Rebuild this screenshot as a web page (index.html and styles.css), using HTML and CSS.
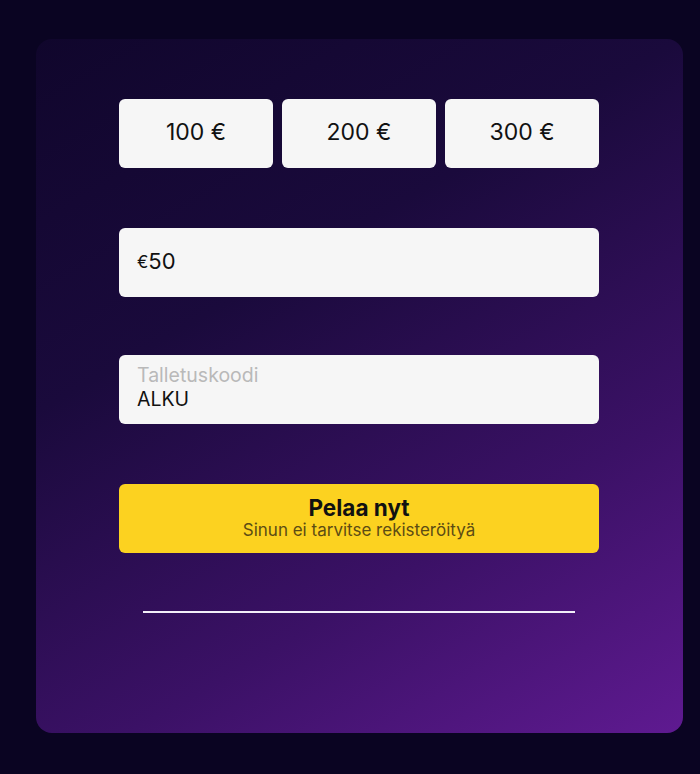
FILE: index.html
```html
<!DOCTYPE html>
<html lang="fi">
<head>
    <meta charset="UTF-8">
    <meta name="viewport" content="width=device-width, initial-scale=1.0">
    <title>Talletus</title>
    <link rel="stylesheet" href="styles.css">
</head>
<body>
    <div class="card">
        <div class="amounts">
            <button class="amount">100 €</button>
            <button class="amount">200 €</button>
            <button class="amount">300 €</button>
        </div>

        <div class="field">
            <span class="currency">€</span><span class="value">50</span>
        </div>

        <div class="field code">
            <span class="label">Talletuskoodi</span>
            <span class="value">ALKU</span>
        </div>

        <button class="play">
            <span class="play-title">Pelaa nyt</span>
            <span class="play-sub">Sinun ei tarvitse rekisteröityä</span>
        </button>

        <div class="divider"></div>
    </div>
</body>
</html>
```

FILE: styles.css
```css
* {
    margin: 0;
    padding: 0;
    box-sizing: border-box;
    font-family: 'Inter', 'Noto Sans', sans-serif;
}

body {
    background: #0a0422;
    min-height: 100vh;
    padding: 39px 17px 0 36px;
}

.card {
    width: 647px;
    height: 694px;
    border-radius: 16px;
    background: linear-gradient(150deg, #10062c 0%, #1a0a3c 35%, #3b1166 70%, #5f1a91 100%);
    padding: 60px 84px 0 83px;
    display: flex;
    flex-direction: column;
}

.amounts {
    display: grid;
    grid-template-columns: repeat(3, 1fr);
    gap: 9px;
    margin-bottom: 60px;
}

.amount {
    height: 69px;
    border: none;
    border-radius: 6px;
    background: #f6f6f6;
    color: #111;
    font-size: 23px;
    font-weight: 400;
    padding-bottom: 4px;
}

.field {
    height: 69px;
    border-radius: 6px;
    background: #f6f6f6;
    color: #111;
    padding: 0 18px 4px;
    display: flex;
    align-items: center;
    font-size: 22px;
    margin-bottom: 58px;
}

.currency {
    font-size: 17px;
    margin-top: 2px;
}

.code {
    flex-direction: column;
    align-items: flex-start;
    justify-content: center;
    margin-bottom: 60px;
    padding-bottom: 6px;
}

.code .label {
    color: #b9b9b9;
    font-size: 19.5px;
    line-height: 24px;
}

.code .value {
    font-size: 19.5px;
    line-height: 24px;
}

.play {
    height: 69px;
    border: none;
    border-radius: 6px;
    background: #fcd220;
    display: flex;
    flex-direction: column;
    align-items: center;
    justify-content: center;
    padding-bottom: 2px;
}

.play-title {
    font-size: 22.5px;
    font-weight: 700;
    color: #111;
    line-height: 24px;
}

.play-sub {
    font-size: 17px;
    color: #5c4c14;
    line-height: 20px;
}

.divider {
    height: 2px;
    background: #f2eef8;
    margin: 58px 24px 0 24px;
}
```
